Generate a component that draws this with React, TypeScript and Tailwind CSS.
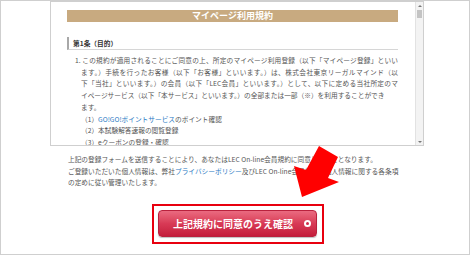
export default function App() {
  return (
    <div className="relative h-[255px] w-[470px] overflow-hidden border border-[#cfcfcf] bg-white text-[#555] [font-family:'Noto_Sans_CJK_JP','Noto_Sans',sans-serif]">
      {/* terms scroll box */}
      <div className="ml-[49px] flex h-[145px] w-[374px] border border-[#cfcfcf]">
        <div className="flex-1 overflow-hidden pl-[16px] pr-[17px] pt-[8px]">
          <div className="h-[12px] bg-[#c8aa80] text-center text-[9px] font-bold leading-[12px] text-white">
            マイページ利用規約
          </div>
          <div className="mt-[15px] border-b border-l-2 border-b-[#d6d6d6] border-l-[#a8a8a8] pl-[4px] text-[6.7px] font-bold leading-[12px] text-[#333]">
            第1条（目的）
          </div>
          <div className="mt-[5px] pl-[14px] text-[6.7px] leading-[11.7px]">
            <div className="-ml-[6px] text-justify [text-align-last:justify]">
              1. この規約が適用されることにご同意の上、所定のマイページ利用登録（以下「マイページ登録」といい
            </div>
            <div className="text-justify [text-align-last:justify]">
              ます。）手続を行ったお客様（以下「お客様」といいます。）は、株式会社東京リーガルマインド（以
            </div>
            <div className="text-justify [text-align-last:justify]">
              下「当社」といいます。）の会員（以下「LEC会員」といいます。）として、以下に定める当社所定のマ
            </div>
            <div>
              イページサービス（以下「本サービス」といいます。）の全部または一部（※）を利用することができ
            </div>
            <div>ます。</div>
            <div>
              （1）<span className="text-[#2878c3]">GO!GO!ポイントサービス</span>のポイント確認
            </div>
            <div>（2）本試験解答速報の閲覧登録</div>
            <div>（3）eクーポンの登録・確認</div>
          </div>
        </div>
        <div className="flex w-[8px] flex-col border-l border-[#e2e2e2] bg-[#f3f3f3]">
          <div className="flex h-[7px] items-center justify-center">
            <div className="h-0 w-0 border-x-[2px] border-b-[2px] border-x-transparent border-b-[#777]" />
          </div>
          <div className="mx-[1px] mt-[1px] h-[8px] bg-[#c4c4c4]" />
          <div className="flex-1" />
          <div className="flex h-[7px] items-center justify-center">
            <div className="h-0 w-0 border-x-[2px] border-t-[2px] border-x-transparent border-t-[#777]" />
          </div>
        </div>
      </div>

      {/* notice */}
      <div className="ml-[67px] mt-[8px] whitespace-nowrap text-[6.7px] leading-[11.7px]">
        <div>上記の登録フォームを送信することにより、あなたはLEC On-line会員規約に同意したこととなります。</div>
        <div>
          ご登録いただいた個人情報は、弊社<span className="text-[#2878c3]">プライバシーポリシー</span>及びLEC On-line会員規約の個人情報に関する各条項
        </div>
        <div>の定めに従い管理いたします。</div>
      </div>

      {/* submit button with highlight */}
      <div className="ml-[151px] mt-[15px] h-[40px] w-[172px] border-2 border-[#e8000f] p-[4px]">
        <div className="flex h-[27px] w-[159px] items-center justify-between rounded-[4px] border border-[#b9213d] bg-gradient-to-b from-[#ea6a80] via-[#d83a56] to-[#c41c3b] pl-[14px] pr-[5px] shadow-[0_1px_1px_rgba(0,0,0,0.25)]">
          <span className="text-[10px] font-bold leading-none text-white">上記規約に同意のうえ確認</span>
          <span className="flex h-[7px] w-[7px] items-center justify-center rounded-full bg-white">
            <span className="h-[3px] w-[3px] rounded-full bg-[#cf2b4a]" />
          </span>
        </div>
      </div>

      {/* red pointer arrow */}
      <svg
        className="pointer-events-none absolute left-[-1px] top-[-1px] h-[255px] w-[470px]"
        viewBox="0 0 470 255"
      >
        <polygon
          points="319,146 338,157 328,178 339,182 302,197 294,166 306,170"
          fill="#ff0000"
        />
      </svg>
    </div>
  );
}
